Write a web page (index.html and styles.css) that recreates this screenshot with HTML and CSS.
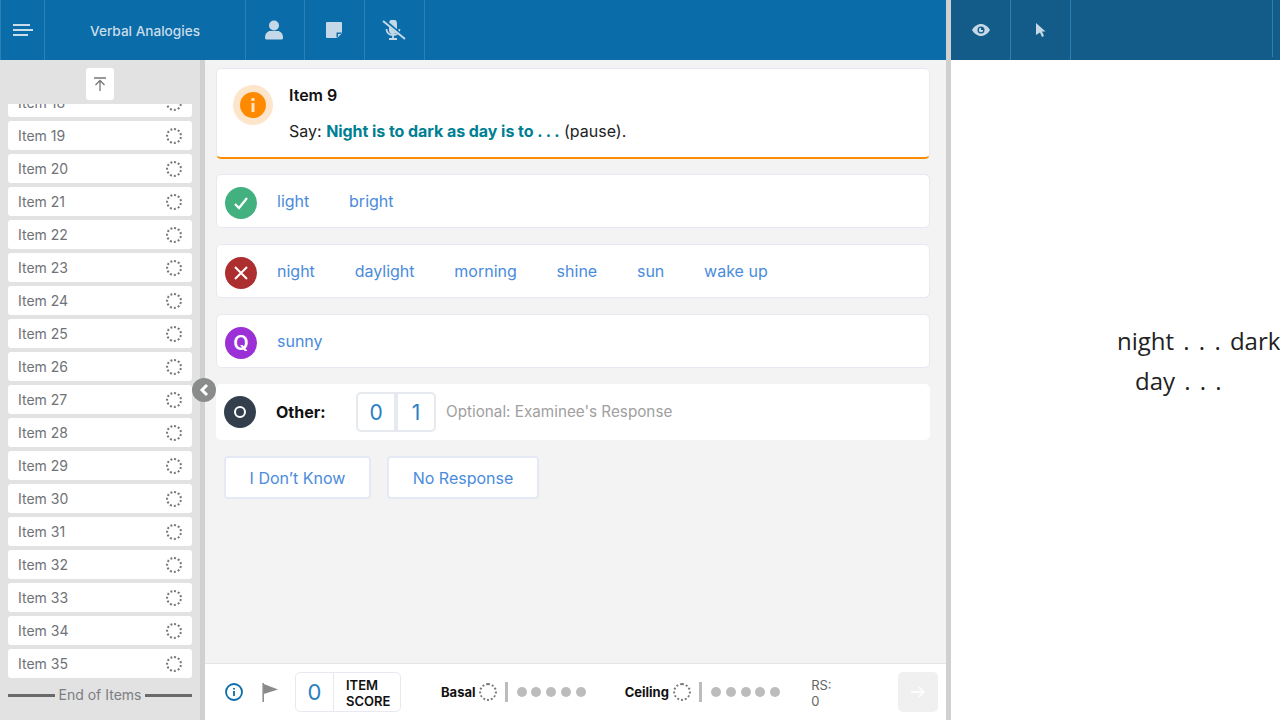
FILE: index.html
```html
<!DOCTYPE html>
<html lang="en">
<head>
    <meta charset="UTF-8">
    <meta name="viewport" content="width=device-width, initial-scale=1.0">
    <title>Verbal Analogies</title>
    <link rel="stylesheet" href="styles.css">
</head>
<body>
    <div class="app">
        <div class="examiner">
            <header class="topbar">
                <div class="cell cell-menu">
                    <svg width="21" height="12" viewBox="0 0 21 12"><path d="M0 1h17M0 6h20M0 11h15" stroke="#c9dcea" stroke-width="2" fill="none"/></svg>
                </div>
                <div class="cell cell-title">Verbal Analogies</div>
                <div class="cell cell-tool">
                    <svg width="20" height="20" viewBox="0 0 20 20" fill="#c5d8e7"><circle cx="10" cy="5.500" r="5"/><path d="M1 18c0-5 3-7 5-7h8c2 0 5 2 5 7 0 1-1 1.500-2 1.500H3c-1 0-2-.5-2-1.500z"/></svg>
                </div>
                <div class="cell cell-tool">
                    <svg width="16" height="16" viewBox="0 0 16 16"><path d="M0 1a1 1 0 0 1 1-1h14a1 1 0 0 1 1 1v10l-5 5H1a1 1 0 0 1-1-1z" fill="#c5d8e7"/><path d="M10.500 16v-5.500H16z" fill="#0a6ca9"/><path d="M12 15v-3h3z" fill="#c5d8e7"/></svg>
                </div>
                <div class="cell cell-tool">
                    <svg width="24" height="20" viewBox="0 0 24 20" fill="none"><path d="M7 3.500a4 4 0 0 1 8 0V10a4 4 0 0 1-8 0z" fill="#c5d8e7"/><path d="M4.500 9c0 4 3 6 6.500 6s6.500-2 6.500-6M11 15v3M7 19h8" stroke="#c5d8e7" stroke-width="1.800"/><path d="M2 0l22 19" stroke="#0a6ca9" stroke-width="3"/><path d="M1 1l22 18" stroke="#c5d8e7" stroke-width="2"/></svg>
                </div>
            </header>
            <div class="workspace">
                <aside class="sidebar">
                    <div class="to-top">
                        <button class="to-top-btn">
                            <svg width="14" height="14" viewBox="0 0 14 14" fill="none" stroke="#777" stroke-width="1.300"><path d="M1 1h12M7 14V3.500M2.500 8L7 3.500 11.500 8"/></svg>
                        </button>
                    </div>
                    <div class="item-scroll">
                        <ul class="item-list">
                            <li class="item"><span>Item 18</span><i class="pending"></i></li>
                            <li class="item"><span>Item 19</span><i class="pending"></i></li>
                            <li class="item"><span>Item 20</span><i class="pending"></i></li>
                            <li class="item"><span>Item 21</span><i class="pending"></i></li>
                            <li class="item"><span>Item 22</span><i class="pending"></i></li>
                            <li class="item"><span>Item 23</span><i class="pending"></i></li>
                            <li class="item"><span>Item 24</span><i class="pending"></i></li>
                            <li class="item"><span>Item 25</span><i class="pending"></i></li>
                            <li class="item"><span>Item 26</span><i class="pending"></i></li>
                            <li class="item"><span>Item 27</span><i class="pending"></i></li>
                            <li class="item"><span>Item 28</span><i class="pending"></i></li>
                            <li class="item"><span>Item 29</span><i class="pending"></i></li>
                            <li class="item"><span>Item 30</span><i class="pending"></i></li>
                            <li class="item"><span>Item 31</span><i class="pending"></i></li>
                            <li class="item"><span>Item 32</span><i class="pending"></i></li>
                            <li class="item"><span>Item 33</span><i class="pending"></i></li>
                            <li class="item"><span>Item 34</span><i class="pending"></i></li>
                            <li class="item"><span>Item 35</span><i class="pending"></i></li>
                        </ul>
                        <div class="end-items">End of Items</div>
                    </div>
                    <div class="collapse">
                        <svg width="10" height="14" viewBox="0 0 10 14" fill="none" stroke="#fff" stroke-width="3"><path d="M8 2L3 7l5 5"/></svg>
                    </div>
                </aside>
                <main class="main">
                    <div class="content">
                        <section class="prompt">
                            <div class="prompt-icon">
                                <div class="prompt-dot">
                                    <svg width="4" height="14" viewBox="0 0 4 14" fill="#ffe3c4"><rect x="0.500" y="0" width="3" height="3"/><rect x="0.500" y="5" width="3" height="9"/></svg>
                                </div>
                            </div>
                            <div>
                                <div class="prompt-title">Item 9</div>
                                <div class="prompt-text">Say: <b>Night is to dark as day is to . . .</b> (pause).</div>
                            </div>
                        </section>
                        <section class="answer-row">
                            <div class="badge badge-correct">
                                <svg width="16" height="14" viewBox="0 0 16 14" fill="none" stroke="#fff" stroke-width="2.200"><path d="M2 8l4 4 8-10"/></svg>
                            </div>
                            <span class="answer">light</span><span class="answer">bright</span>
                        </section>
                        <section class="answer-row">
                            <div class="badge badge-wrong">
                                <svg width="14" height="14" viewBox="0 0 14 14" fill="none" stroke="#fff" stroke-width="2"><path d="M1 1l12 12M13 1L1 13"/></svg>
                            </div>
                            <span class="answer">night</span><span class="answer">daylight</span><span class="answer">morning</span><span class="answer">shine</span><span class="answer">sun</span><span class="answer">wake up</span>
                        </section>
                        <section class="answer-row">
                            <div class="badge badge-query">Q</div>
                            <span class="answer">sunny</span>
                        </section>
                        <section class="other-row">
                            <div class="badge badge-other"><i class="other-ring"></i></div>
                            <strong class="other-label">Other:</strong>
                            <div class="score-toggle"><span>0</span><span>1</span></div>
                            <span class="other-hint">Optional: Examinee's Response</span>
                        </section>
                        <div class="actions">
                            <button class="action action-dk">I Don’t Know</button>
                            <button class="action action-nr">No Response</button>
                        </div>
                    </div>
                    <footer class="footer">
                        <svg class="foot-info" width="18" height="18" viewBox="0 0 18 18" fill="none"><circle cx="9" cy="9" r="8" stroke="#0a6ca9" stroke-width="1.800"/><path d="M9 8v5M9 5v1.500" stroke="#0a6ca9" stroke-width="1.800"/></svg>
                        <svg class="foot-flag" width="16" height="19" viewBox="0 0 16 19"><path d="M0.500 0h1.300v19H0.500z" fill="#777"/><path d="M1.800 1L16 6.500 1.800 11z" fill="#8a8a8a"/></svg>
                        <div class="item-score">
                            <span class="item-score-val">0</span>
                            <span class="item-score-label">ITEM<br>SCORE</span>
                        </div>
                        <div class="rule rule-basal">
                            <b>Basal</b><i class="pending"></i><span class="bar"></span>
                            <span class="dots"><i></i><i></i><i></i><i></i><i></i></span>
                        </div>
                        <div class="rule rule-ceiling">
                            <b>Ceiling</b><i class="pending"></i><span class="bar"></span>
                            <span class="dots"><i></i><i></i><i></i><i></i><i></i></span>
                        </div>
                        <div class="raw-score">RS:<br>0</div>
                        <button class="next">
                            <svg width="14" height="12" viewBox="0 0 14 12" fill="none" stroke="#fff" stroke-width="1.500"><path d="M0 6h13M8 1l5 5-5 5"/></svg>
                        </button>
                    </footer>
                </main>
            </div>
        </div>
        <div class="examinee">
            <header class="topbar topbar-dark">
                <div class="cell">
                    <svg width="18" height="12" viewBox="0 0 18 12"><path d="M0 6c2-3.500 5.500-6 9-6s7 2.500 9 6c-2 3.500-5.500 6-9 6S2 9.500 0 6z" fill="#c5d8e7"/><circle cx="9" cy="6" r="3.500" fill="#135c89"/><path d="M9 3.800V6h2.200A2.200 2.200 0 1 1 9 3.800z" fill="#c5d8e7"/></svg>
                </div>
                <div class="cell">
                    <svg width="10" height="14" viewBox="0 0 10 14"><path d="M0 0l9.500 8.500H6l2 4.500-2 1-2-4.500L0 12z" fill="#c5d8e7"/></svg>
                </div>
                <div class="cell cell-fill"></div>
            </header>
            <div class="stimulus">
                <p class="stim-line">night . . . dark</p>
                <p class="stim-line stim-second">day . . .</p>
            </div>
        </div>
    </div>
</body>
</html>
```

FILE: styles.css
```css
* {
    box-sizing: border-box;
}

html, body {
    margin: 0;
    height: 100%;
    overflow: hidden;
}

body {
    font-family: Inter, "Liberation Sans", sans-serif;
    background-color: white;
}

.app {
    display: flex;
    width: 1280px;
    height: 720px;
}

.examiner {
    width: 946px;
    display: flex;
    flex-direction: column;
}

.examinee {
    width: 334px;
    border-left: 5px solid #d0d0d0;
    display: flex;
    flex-direction: column;
}

/* Top bars */
.topbar {
    height: 60px;
    flex: none;
    display: flex;
    background-color: #0a6ca9;
    color: #c9dcea;
}

.topbar-dark {
    background-color: #135c89;
}

.cell {
    width: 60px;
    height: 60px;
    display: flex;
    align-items: center;
    justify-content: center;
    border-right: 1px solid #2b80b6;
}

.cell-menu {
    width: 45px;
    border-left: 1px solid #2b80b6;
    padding-left: 2px;
}

.cell-title {
    width: 201px;
    padding-top: 2px;
    font-size: 13.600px;
    font-weight: 500;
}

.cell-title + .cell {
    width: 59px;
}

.cell-tool svg {
    margin-right: 2px;
}

.cell-fill {
    width: 202px;
    height: 57px;
}

/* Left item list */
.workspace {
    flex: 1;
    display: flex;
    min-height: 0;
}

.sidebar {
    width: 205px;
    flex: none;
    position: relative;
    background-color: #e2e2e2;
    border-right: 5px solid #d0d0d0;
    display: flex;
    flex-direction: column;
}

.to-top {
    height: 44px;
    flex: none;
    padding-top: 8px;
    display: flex;
    justify-content: center;
}

.to-top-btn {
    width: 28px;
    height: 32px;
    padding: 0;
    border: none;
    border-radius: 3px;
    background-color: white;
    display: flex;
    align-items: center;
    justify-content: center;
}

.item-scroll {
    flex: 1;
    overflow: hidden;
    padding: 0 8px;
}

.item-list {
    list-style: none;
    margin: -16px 0 0;
    padding: 0;
}

.item {
    height: 29px;
    margin-bottom: 4px;
    padding: 0 10px;
    border-radius: 3px;
    background-color: white;
    display: flex;
    align-items: center;
    justify-content: space-between;
    font-size: 14px;
    color: #6f7276;
}

.pending {
    display: block;
    width: 16px;
    height: 16px;
    border: 2px dotted #777;
    border-radius: 50%;
}

.end-items {
    display: flex;
    align-items: center;
    gap: 4px;
    margin-top: 7px;
    font-size: 14px;
    line-height: 20px;
    color: #7b7e82;
    white-space: nowrap;
}

.end-items::before, .end-items::after {
    content: "";
    flex: 1;
    height: 3px;
    background-color: #6a6a6a;
}

.collapse {
    position: absolute;
    left: 192px;
    top: 318px;
    width: 24px;
    height: 24px;
    border-radius: 50%;
    background-color: #8a8c8c;
    display: flex;
    align-items: center;
    justify-content: center;
    z-index: 2;
}

/* Main column */
.main {
    flex: 1;
    display: flex;
    flex-direction: column;
    background-color: #f3f3f4;
    min-width: 0;
}

.content {
    flex: 1;
    padding: 8px 16px 0 11px;
}

.prompt {
    height: 91px;
    display: flex;
    gap: 16px;
    padding: 16px 16px 0;
    background-color: white;
    border: 1px solid #e6e9f0;
    border-bottom: 2px solid #ff8c00;
    border-radius: 5px;
}

.prompt-icon {
    width: 40px;
    height: 40px;
    border-radius: 50%;
    background-color: #fde5cc;
    display: flex;
    align-items: center;
    justify-content: center;
}

.prompt-dot {
    width: 26px;
    height: 26px;
    border-radius: 50%;
    background-color: #ff8a00;
    display: flex;
    align-items: center;
    justify-content: center;
}

.prompt-title {
    font-size: 16px;
    font-weight: 600;
    line-height: 20px;
    color: #111;
}

.prompt-text {
    margin-top: 16px;
    font-size: 16px;
    line-height: 20px;
    color: #222;
}

.prompt-text b {
    font-weight: 700;
    letter-spacing: -0.060px;
    color: #007f93;
}

.answer-row {
    height: 54px;
    margin-top: 16px;
    padding-left: 8px;
    display: flex;
    align-items: center;
    background-color: white;
    border: 1px solid #e6e9f0;
    border-radius: 5px;
}

.prompt + .answer-row {
    margin-top: 15px;
}

.badge {
    width: 32px;
    height: 32px;
    flex: none;
    border-radius: 50%;
    display: flex;
    align-items: center;
    justify-content: center;
    margin-right: 20px;
}

.answer-row .badge {
    margin-top: 4px;
}

.badge-correct {
    background-color: #43b17f;
}

.badge-wrong {
    background-color: #ad2e2e;
}

.badge-query {
    background-color: #9a30d6;
    color: white;
    font-size: 20px;
    font-weight: 600;
}

.badge-other {
    background-color: #343f4e;
}

.other-ring {
    width: 12px;
    height: 12px;
    border: 2.500px solid white;
    border-radius: 50%;
}

.answer {
    font-size: 16px;
    color: #4a8bdc;
    margin-right: 39.800px;
}

.other-row {
    height: 56px;
    margin-top: 16px;
    padding-left: 8px;
    display: flex;
    align-items: center;
    background-color: white;
    border-radius: 5px;
}

.other-label {
    width: 80px;
    font-size: 16px;
    font-weight: 700;
    color: #111;
}

.score-toggle {
    display: flex;
    height: 40px;
    border: 2px solid #e6e9ee;
    border-radius: 5px;
    margin-right: 10px;
}

.score-toggle span {
    width: 36px;
    display: flex;
    align-items: center;
    justify-content: center;
    font-size: 21px;
    color: #2a7ec4;
}

.score-toggle span + span {
    border-left: 4px solid #e6e9ee;
    width: 40px;
}

.other-hint {
    font-size: 15.250px;
    color: #a0a0a0;
    margin-top: -2px;
}

.actions {
    display: flex;
    gap: 16px;
    margin-top: 16px;
    padding-left: 8px;
}

.action {
    height: 43px;
    background-color: white;
    border: 2px solid #e4e9f5;
    border-radius: 4px;
    font-family: inherit;
    font-size: 16px;
    color: #4a8bdc;
    padding: 0;
}

.action-dk {
    width: 147px;
}

.action-nr {
    width: 152px;
}

/* Footer strip */
.footer {
    height: 57px;
    flex: none;
    display: flex;
    align-items: center;
    background-color: white;
    border-top: 1px solid #e5e5e5;
    padding-left: 20px;
}

.foot-info {
    flex: none;
}

.foot-flag {
    margin-left: 19px;
    margin-right: 17px;
    flex: none;
}

.item-score {
    display: flex;
    width: 106px;
    height: 40px;
    flex: none;
    border: 1px solid #e6e9f0;
    border-radius: 5px;
}

.item-score-val {
    width: 38px;
    border-right: 1px solid #e6e9f0;
    display: flex;
    align-items: center;
    justify-content: center;
    font-size: 22px;
    color: #2a7ec4;
}

.item-score-label {
    padding-left: 12px;
    font-size: 13px;
    font-weight: 600;
    line-height: 16px;
    padding-top: 4px;
    color: #111;
}

.rule {
    display: flex;
    align-items: center;
    flex: none;
    font-size: 13px;
    color: #111;
}

.rule b {
    font-weight: 700;
    margin-right: 3px;
}

.rule .pending {
    width: 18px;
    height: 18px;
}

.rule-basal {
    margin-left: 40px;
}

.rule-ceiling {
    margin-left: 39px;
}

.rule-ceiling b {
    margin-right: 4px;
}

.bar {
    width: 3px;
    height: 20px;
    margin-left: 8px;
    margin-right: 9px;
    background-color: #bcbcbc;
}

.dots {
    display: flex;
    gap: 4.800px;
}

.dots i {
    width: 10px;
    height: 10px;
    border-radius: 50%;
    background-color: #bcbcbc;
}

.raw-score {
    margin-left: 31px;
    padding-top: 2px;
    width: 87px;
    flex: none;
    font-size: 13px;
    line-height: 16px;
    color: #666;
}

.next {
    width: 40px;
    height: 40px;
    flex: none;
    padding: 0;
    border: none;
    border-radius: 5px;
    background-color: #f0f0f0;
    display: flex;
    align-items: center;
    justify-content: center;
}

/* Examinee side */
.stimulus {
    flex: 1;
    padding-top: 261px;
    overflow: hidden;
}

.stim-line {
    margin: 0;
    padding-left: 166px;
    font-family: "Open Sans", sans-serif;
    font-size: 24px;
    word-spacing: 3px;
    line-height: 40px;
    color: #222;
    white-space: nowrap;
}

.stim-second {
    padding-left: 184px;
}
```
